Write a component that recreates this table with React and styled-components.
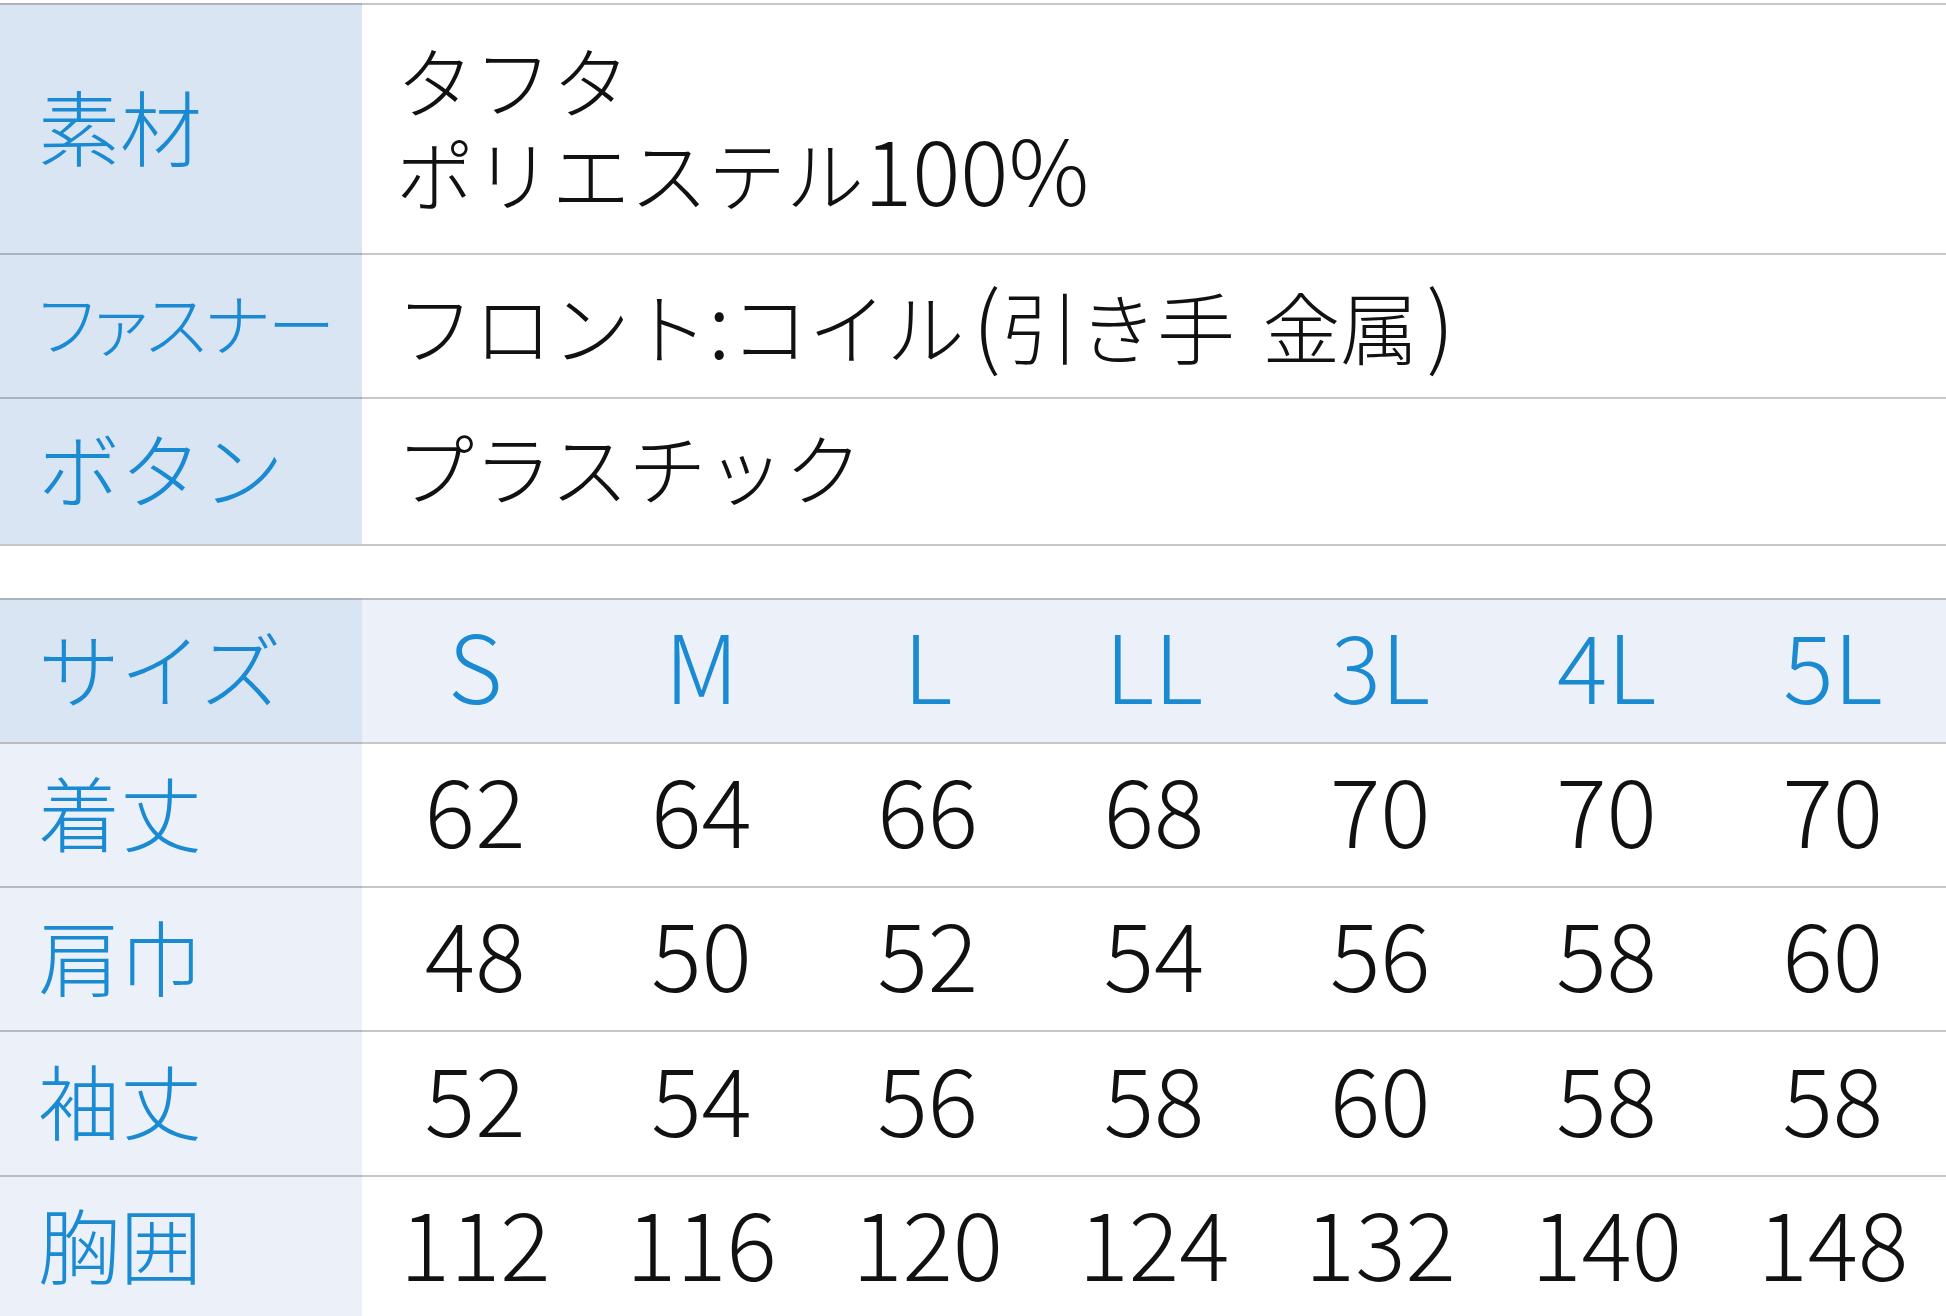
import React from 'react'
import styled, { createGlobalStyle } from 'styled-components'

const GlobalStyle = createGlobalStyle`
  html, body {
    margin: 0;
    padding: 0;
    background: #ffffff;
  }
  body {
    font-family: "Noto Sans CJK JP", "Noto Sans", sans-serif;
    font-weight: 300;
    color: #111111;
  }
`

const specs = [
    { label: '素材', height: 250, lines: [['タフタ'], ['ポリエステル', { latin: '100%' }]] },
    { label: 'ファスナー', narrow: true, height: 144, lines: [['フロント', { latin: ':' }, 'コイル', { latin: '(', gap: 'left' }, '引き手 金属', { latin: ')', gap: 'left' }]] },
    { label: 'ボタン', height: 147, lines: [['プラスチック']] },
]

const sizes = ['S', 'M', 'L', 'LL', '3L', '4L', '5L']

const measures = [
    { label: '着丈', values: [62, 64, 66, 68, 70, 70, 70] },
    { label: '肩巾', values: [48, 50, 52, 54, 56, 58, 60] },
    { label: '袖丈', values: [52, 54, 56, 58, 60, 58, 58] },
    { label: '胸囲', values: [112, 116, 120, 124, 132, 140, 148] },
]

function App() {
    return (
        <>
            <GlobalStyle />
            <Page>
                <SpecTable>
                    {specs.map((s) => (
                        <SpecRow key={s.label} $h={s.height}>
                            <Label $narrow={s.narrow}>{s.label}</Label>
                            <Value>
                                {s.lines.map((line, i) => (
                                    <Line key={i}>
                                        {line.map((part, j) =>
                                            typeof part === 'string'
                                                ? <span key={j}>{part}</span>
                                                : <Latin key={j} $gap={part.gap}>{part.latin}</Latin>
                                        )}
                                    </Line>
                                ))}
                            </Value>
                        </SpecRow>
                    ))}
                </SpecTable>

                <SizeTable>
                    <SizeRow $h={144}>
                        <Label>サイズ</Label>
                        {sizes.map((s) => (
                            <SizeCell key={s} $head>{s}</SizeCell>
                        ))}
                    </SizeRow>
                    {measures.map((m, i) => (
                        <SizeRow key={m.label} $h={i === 2 ? 145 : i === 3 ? 143 : 144}>
                            <Label $light>{m.label}</Label>
                            {m.values.map((v, j) => (
                                <SizeCell key={j}>{v}</SizeCell>
                            ))}
                        </SizeRow>
                    ))}
                </SizeTable>
            </Page>
        </>
    )
}

export default App

const Page = styled.div`
    width: 1946px;
    padding-top: 3px;
`

const SpecTable = styled.div`
    display: flex;
    flex-direction: column;
    border-bottom: 2px solid #c6c6c6;
`

const SpecRow = styled.div`
    display: grid;
    grid-template-columns: 362px 1fr;
    height: ${(p) => p.$h}px;
`

const Label = styled.div`
    display: flex;
    align-items: center;
    padding: 0 0 10px 38px;
    border-top: 2px solid rgba(0, 0, 0, 0.22);
    background: ${(p) => (p.$light ? '#ecf1f9' : '#dae5f4')};
    color: #1a8ad2;
    font-size: ${(p) => (p.$narrow ? 68 : 82)}px;
    font-feature-settings: ${(p) => (p.$narrow ? '"palt"' : 'normal')};
    letter-spacing: ${(p) => (p.$narrow ? '-2px' : '0')};
    white-space: nowrap;
`

const Value = styled.div`
    display: flex;
    flex-direction: column;
    justify-content: center;
    padding: 0 0 12px 34px;
    border-top: 2px solid rgba(0, 0, 0, 0.22);
    font-size: 78px;
    line-height: 88px;
    word-spacing: 10px;
    white-space: nowrap;
`

const Line = styled.div`
    height: 88px;
`

const Latin = styled.span`
    display: inline-block;
    height: 88px;
    font-size: 90px;
    line-height: 88px;
    margin-left: ${(p) => (p.$gap === 'left' ? '8px' : '0')};
`

const SizeTable = styled.div`
    margin-top: 52px;
    display: flex;
    flex-direction: column;
`

const SizeRow = styled.div`
    display: grid;
    grid-template-columns: 362px repeat(7, 1fr);
    height: ${(p) => p.$h}px;
`

const SizeCell = styled.div`
    display: flex;
    align-items: center;
    justify-content: center;
    padding-bottom: 16px;
    border-top: 2px solid rgba(0, 0, 0, 0.22);
    background: ${(p) => (p.$head ? '#ecf1f9' : '#ffffff')};
    color: ${(p) => (p.$head ? '#1a8ad2' : '#111111')};
    font-size: 94px;
    line-height: 1;
`
